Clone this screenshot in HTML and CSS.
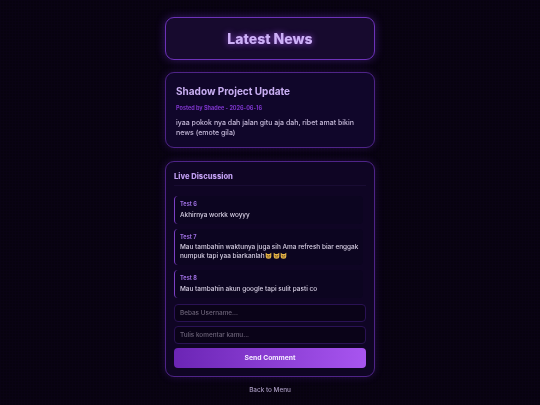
FILE: index.html
```html
<!DOCTYPE html>
<html lang="en">
<head>
<meta charset="utf-8">
<title>Latest News</title>
<link rel="stylesheet" href="styles.css">
</head>
<body>
<main class="page">
  <header class="card hero"><h1>Latest News</h1></header>
  <article class="card news">
    <h2>Shadow Project Update</h2>
    <p class="meta">Posted by Shadee - 2026-06-16</p>
    <p class="body">iyaa pokok nya dah jalan gitu aja dah, ribet amat bikin news (emote gila)</p>
  </article>
  <section class="card discussion">
    <h3>Live Discussion</h3>
    <div class="list">
      <div class="comment"><div class="name">Test 6</div><div class="text">Akhirnya workk woyyy</div></div>
      <div class="comment"><div class="name">Test 7</div><div class="text">Mau tambahin waktunya juga sih Ama refresh biar enggak numpuk tapi yaa biarkanlah<svg class="cat" viewBox="0 0 10 10"><path d="M1 1l2.5 2h3L9 1v5a4 3.6 0 0 1-8 0z" fill="#e8b84a"/><path d="M2.5 5h2M5.5 5h2M3 7h4" stroke="#5a3510" stroke-width=".9" fill="none"/></svg><svg class="cat" viewBox="0 0 10 10"><path d="M1 1l2.5 2h3L9 1v5a4 3.6 0 0 1-8 0z" fill="#e8b84a"/><path d="M2.5 5h2M5.5 5h2M3 7h4" stroke="#5a3510" stroke-width=".9" fill="none"/></svg><svg class="cat" viewBox="0 0 10 10"><path d="M1 1l2.5 2h3L9 1v5a4 3.6 0 0 1-8 0z" fill="#e8b84a"/><path d="M2.5 5h2M5.5 5h2M3 7h4" stroke="#5a3510" stroke-width=".9" fill="none"/></svg></div></div>
      <div class="comment"><div class="name">Test 8</div><div class="text">Mau tambahin akun google tapi sulit pasti co</div></div>
    </div>
    <form class="form">
      <input class="field" type="text" placeholder="Bebas Username...">
      <input class="field" type="text" placeholder="Tulis komentar kamu...">
      <button class="send" type="button">Send Comment</button>
    </form>
  </section>
  <a class="back" href="#">Back to Menu</a>
</main>
</body>
</html>
```
FILE: styles.css
```css
* { box-sizing: border-box; }
html, body { margin: 0; height: 405px; overflow: hidden; }
body {
  background-color: #07020f;
  background-image:
    linear-gradient(rgba(120, 60, 200, .016) 1px, transparent 1px),
    linear-gradient(90deg, rgba(120, 60, 200, .016) 1px, transparent 1px);
  background-size: 3px 3px;
  font-family: "Inter", "Liberation Sans", sans-serif;
  color: #d8cdea;
}
.page {
  width: 210px;
  margin: 0 auto;
  padding-top: 17px;
  display: flex;
  flex-direction: column;
  filter: blur(.35px);
}
.card {
  border: 1px solid #4f2488;
  border-radius: 9px;
  background: #10062a;
  box-shadow: 0 0 9px rgba(124, 58, 237, .22);
}
.hero {
  height: 43px;
  display: flex;
  align-items: center;
  justify-content: center;
  border-color: #6d32b8;
  background: #170a2e;
  box-shadow: 0 0 10px rgba(124, 58, 237, .38);
}
h1 {
  margin: 0;
  font-size: 14px;
  font-weight: 800;
  color: #cdb0f7;
  text-shadow: 0 0 6px rgba(168, 85, 247, .8);
}
.news {
  margin-top: 12px;
  height: 76px;
  padding: 12px 10px 0;
}
h2 {
  margin: 0;
  font-size: 10px;
  line-height: 13px;
  font-weight: 700;
  color: #c9aef2;
}
.meta {
  margin: 6px 0 0;
  font-size: 5.5px;
  line-height: 8px;
  font-weight: 700;
  color: #7e35cc;
}
.body {
  margin: 5.5px 0 0;
  font-size: 7px;
  line-height: 10.5px;
  font-weight: 500;
  color: #c4b8d8;
}
.discussion {
  margin-top: 13px;
  height: 216px;
  padding: 9px 8px 8px;
  background: #0f0524;
}
h3 {
  margin: 0;
  font-size: 7.6px;
  line-height: 11px;
  font-weight: 800;
  color: #c09ef0;
}
.list {
  margin-top: 3px;
  padding: 10px 3px 0 0;
  border-top: 1px solid #190c33;
  display: flex;
  flex-direction: column;
  gap: 5px;
}
.comment {
  border-left: 1px solid #7c3fc4;
  border-radius: 4px;
  background: #0c0520;
  padding: 4px 3px 4px 5px;
}
.name {
  font-size: 5.6px;
  line-height: 8px;
  font-weight: 700;
  color: #9d6fe0;
}
.text {
  margin-top: 2.5px;
  font-size: 6.45px;
  line-height: 9px;
  font-weight: 500;
  color: #dcd4e8;
  opacity: .98;
}
.cat { width: 7px; height: 7px; margin-left: .5px; vertical-align: -1px; }
.form {
  margin-top: 6px;
  display: flex;
  flex-direction: column;
  gap: 4px;
}
.field {
  height: 18px;
  padding: 0 5px;
  border: 1px solid #2a1254;
  border-radius: 4px;
  background: #0a0318;
  font: 500 6.4px "Inter", "Liberation Sans", sans-serif;
  color: #d8cdea;
}
.field::placeholder { color: #6c6378; opacity: 1; }
.send {
  height: 20px;
  border: 0;
  border-radius: 4px;
  background: linear-gradient(90deg, #6b25b5, #a855f0);
  color: #f3ebff;
  font: 700 6.8px "Inter", "Liberation Sans", sans-serif;
}
.back {
  margin-top: 9px;
  text-align: center;
  font-size: 6.4px;
  line-height: 9px;
  font-weight: 500;
  color: #a99bc0;
  text-decoration: none;
}
```
